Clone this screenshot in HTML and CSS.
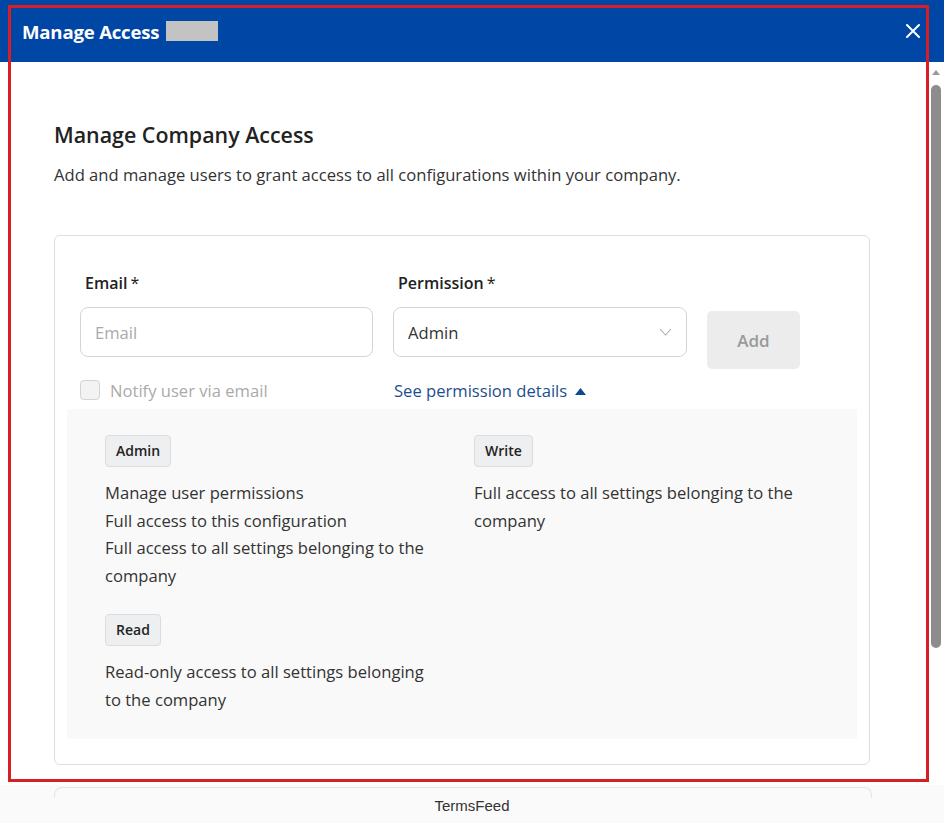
FILE: index.html
```html
<!DOCTYPE html>
<html lang="en">
<head>
    <meta charset="UTF-8">
    <meta name="viewport" content="width=device-width, initial-scale=1.0">
    <title>Manage Access</title>
    <link rel="stylesheet" href="styles.css">
</head>
<body>
    <div class="modal">
        <div class="modal-header">
            <h1>Manage Access <span class="company-name"></span></h1>
            <button class="close" aria-label="Close">
                <svg width="14" height="14" viewBox="0 0 14 14"><path d="M1 1L13 13M13 1L1 13" stroke="#fff" stroke-width="2" stroke-linecap="round"/></svg>
            </button>
        </div>

        <div class="modal-body">
            <h2>Manage Company Access</h2>
            <p class="intro">Add and manage users to grant access to all configurations within your company.</p>

            <div class="card">
                <div class="form-row">
                    <div class="field email-field">
                        <label>Email<span class="req">*</span></label>
                        <input type="text" placeholder="Email">
                    </div>
                    <div class="field perm-field">
                        <label>Permission<span class="req">*</span></label>
                        <div class="select">
                            <span>Admin</span>
                            <svg width="13" height="8" viewBox="0 0 13 8"><path d="M1 1L6.5 7L12 1" fill="none" stroke="#aaa" stroke-width="1.1"/></svg>
                        </div>
                    </div>
                    <button class="add-btn" disabled>Add</button>
                </div>

                <div class="options-row">
                    <label class="notify"><span class="checkbox"></span>Notify user via email</label>
                    <a class="details-link" href="#">See permission details
                        <svg class="caret" width="11" height="7" viewBox="0 0 11 7"><path d="M0 7L5.5 0L11 7Z" fill="#0c4a8e"/></svg>
                    </a>
                </div>

                <div class="perm-panel">
                    <div class="perm">
                        <span class="tag">Admin</span>
                        <p>Manage user permissions</p>
                        <p>Full access to this configuration</p>
                        <p>Full access to all settings belonging to the company</p>
                    </div>
                    <div class="perm">
                        <span class="tag">Write</span>
                        <p>Full access to all settings belonging to the company</p>
                    </div>
                    <div class="perm">
                        <span class="tag">Read</span>
                        <p>Read-only access to all settings belonging to the company</p>
                    </div>
                </div>
            </div>
        </div>

        <div class="scrollbar">
            <span class="scroll-up"></span>
            <span class="scroll-thumb"></span>
        </div>

        <div class="footer">
            <div class="next-card"></div>
            <span>TermsFeed</span>
        </div>
    </div>
    <div class="highlight"></div>
</body>
</html>
```

FILE: styles.css
```css
body {
    margin: 0;
    font-family: "Open Sans", "Noto Sans", sans-serif;
    color: #333;
    background: #fff;
    overflow: hidden;
}
.modal {
    position: relative;
    height: 823px;
    display: flex;
    flex-direction: column;
}
.modal-header {
    height: 62px;
    background: #0046a5;
    display: flex;
    align-items: center;
    justify-content: space-between;
    padding: 0 24px 0 22px;
    flex-shrink: 0;
}
.modal-header h1 {
    margin: 0;
    color: #fff;
    font-size: 18.6px;
    font-weight: 700;
    display: flex;
    align-items: center;
    gap: 7px;
    letter-spacing: -0.2px;
}
.company-name {
    display: inline-block;
    width: 52px;
    height: 20px;
    background: #c3c3c3;
}
.close {
    background: none;
    border: none;
    padding: 0;
    display: flex;
    cursor: pointer;
}
.modal-body {
    flex: 1;
    padding: 59px 74px 0 54px;
}
.modal-body h2 {
    margin: 0;
    font-size: 21.4px;
    line-height: 28px;
    font-weight: 600;
    color: #222;
}
.intro {
    margin: 14px 0 0;
    font-size: 16.6px;
    line-height: 24px;
    color: #333;
}
.card {
    margin-top: 48px;
    border: 1px solid #ddd;
    border-radius: 6px;
    padding: 36px 12px 25px;
}
.form-row {
    display: flex;
    gap: 20px;
    padding-left: 13px;
}
.field {
    display: flex;
    flex-direction: column;
    gap: 13px;
}
.email-field { width: 293px; }
.perm-field { width: 294px; }
.field label {
    padding-left: 5px;
    font-size: 16px;
    line-height: 22px;
    font-weight: 600;
    color: #222;
}
.req { margin-left: 3px; font-weight: 400; }
.field input,
.select {
    box-sizing: border-box;
    height: 50px;
    border: 1px solid #d4d4d4;
    border-radius: 8px;
    padding: 0 14px;
    font-family: inherit;
    font-size: 16.6px;
    color: #333;
}
.field input::placeholder { color: #aaa; }
.select {
    display: flex;
    align-items: center;
    justify-content: space-between;
}
.add-btn {
    margin-top: 39px;
    width: 93px;
    height: 58px;
    border: none;
    border-radius: 5px;
    background: #ececec;
    color: #999;
    font-family: inherit;
    font-size: 17px;
    font-weight: 600;
}
.options-row {
    display: flex;
    align-items: center;
    margin-top: 9px;
    padding-left: 13px;
    height: 24px;
    font-size: 16.6px;
}
.notify {
    width: 314px;
    display: flex;
    align-items: center;
    gap: 10px;
    color: #aaa;
}
.checkbox {
    width: 18px;
    height: 18px;
    border: 1px solid #d4d4d4;
    border-radius: 4px;
    background: #f3f3f3;
}
.details-link {
    color: #1c4f8e;
    text-decoration: none;
}
.caret {
    margin-left: 3px;
    vertical-align: 2px;
}
.perm-panel {
    margin-top: 7px;
    background: #f9f9f9;
    padding: 26px 37px 26px 38px;
    display: grid;
    grid-template-columns: 330px 345px;
    column-gap: 39px;
    row-gap: 25px;
}
.perm p {
    margin: 0;
    font-size: 16.6px;
    line-height: 27.5px;
    color: #333;
}
.tag {
    display: inline-block;
    margin-bottom: 12px;
    padding: 0 10px;
    height: 30px;
    line-height: 30px;
    background: #eeeff1;
    border: 1px solid #dcdcdc;
    border-radius: 4px;
    font-size: 14px;
    font-weight: 600;
    color: #222;
}
.scrollbar {
    position: absolute;
    top: 62px;
    right: 0;
    width: 15px;
    bottom: 38px;
    background: #fff;
}
.scroll-up {
    position: absolute;
    top: 8px;
    left: 3px;
    border-left: 4px solid transparent;
    border-right: 4px solid transparent;
    border-bottom: 5px solid #999;
}
.scroll-thumb {
    position: absolute;
    top: 23px;
    left: 2px;
    width: 10px;
    height: 563px;
    border-radius: 5px;
    background: #8c8c8c;
}
.footer {
    position: relative;
    height: 38px;
    background: #fafafa;
    display: flex;
    align-items: center;
    justify-content: center;
    padding-top: 2px;
    box-sizing: border-box;
}
.footer span {
    font-family: "Liberation Sans", Arial, sans-serif;
    font-size: 15px;
    color: #333;
}
.next-card {
    position: absolute;
    top: 2px;
    left: 54px;
    width: 816px;
    height: 10px;
    border: 1px solid #e4e4e4;
    border-bottom: none;
    border-radius: 8px 8px 0 0;
}
.highlight {
    position: absolute;
    top: 5px;
    left: 8px;
    width: 915px;
    height: 771px;
    border: 3px solid #d81e25;
    pointer-events: none;
}
```
